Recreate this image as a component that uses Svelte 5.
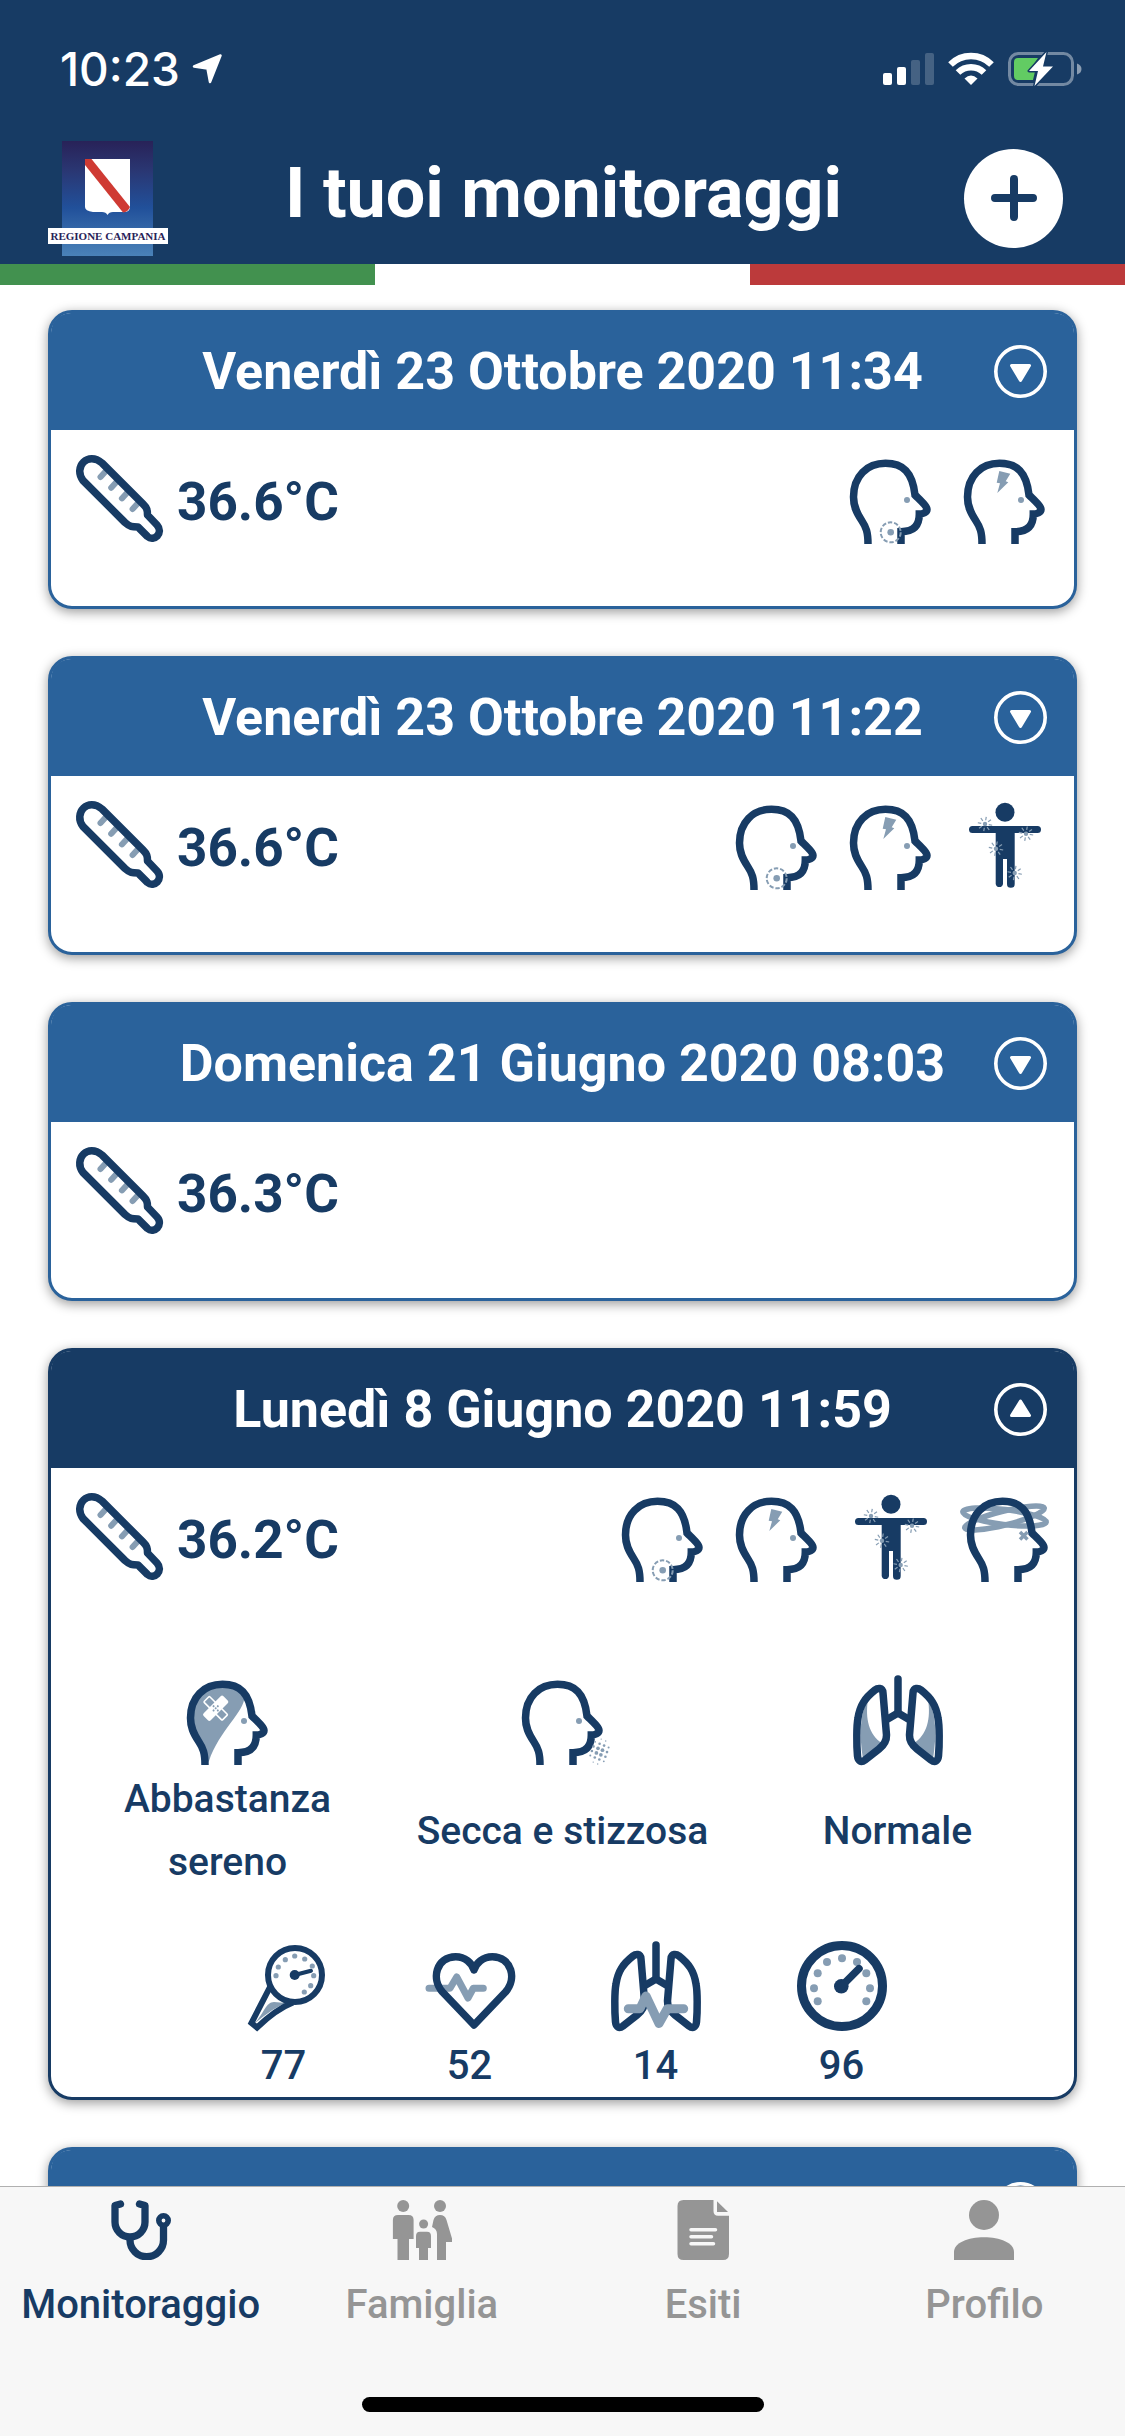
<script>
  let cards = $state([
    { date: 'Venerdì 23 Ottobre 2020 11:34', temp: '36.6°C', symptoms: ['throat', 'headache'], open: false },
    { date: 'Venerdì 23 Ottobre 2020 11:22', temp: '36.6°C', symptoms: ['throat', 'headache', 'aches'], open: false },
    { date: 'Domenica 21 Giugno 2020 08:03', temp: '36.3°C', symptoms: [], open: false },
    {
      date: 'Lunedì 8 Giugno 2020 11:59',
      temp: '36.2°C',
      symptoms: ['throat', 'headache', 'aches', 'dizzy'],
      open: true,
      states: [
        { icon: 'mood', label: 'Abbastanza sereno' },
        { icon: 'cough', label: 'Secca e stizzosa' },
        { icon: 'lungs', label: 'Normale' }
      ],
      vitals: [
        { icon: 'pressure', value: 77 },
        { icon: 'heart', value: 52 },
        { icon: 'breath', value: 14 },
        { icon: 'gauge', value: 96 }
      ]
    },
    { date: '', temp: '', symptoms: [], open: false }
  ]);

  const tabs = [
    { icon: 'stethoscope', label: 'Monitoraggio' },
    { icon: 'family', label: 'Famiglia' },
    { icon: 'document', label: 'Esiti' },
    { icon: 'person', label: 'Profilo' }
  ];
  let active = $state('Monitoraggio');

  const bursts = [[25, 24], [66, 33.7], [36, 48.7], [54.7, 73]];
  const rays = [10, 55, 100, 145, 190, 235, 280, 325];
  const gaugeDots = [[45, 17.3], [30, 21], [60, 21], [20.7, 32.3], [69.3, 32.3], [17, 47.3], [73, 47.3], [20.7, 60.3], [69.3, 60.3]];
  const pressureDots = [[55.7, 15], [46.3, 18.7], [65.7, 18], [39.3, 26], [73.3, 25], [37, 34.7], [74.7, 34.7], [71.7, 44.7], [65.3, 51]];

  // Halftone spray in front of the mouth: dots shrink away from the centre.
  const spray = [];
  for (let i = -1; i <= 2; i++) {
    for (let j = -2; j <= 3; j++) {
      const x = 80 + i * 4.5 - j * 1.6;
      const y = 73.3 + i * 1.9 + j * 4.6;
      const r = 2.3 - Math.hypot(x - 81.5, y - 76.5) * 0.13;
      if (r > 0.6) spray.push([x, y, r]);
    }
  }

  const headPath =
    'M22 90C22 78 20 73 16 67C10 58 7.5 52 7.5 43C7.5 22 21 9.3 39.5 9.3C57 9.3 66.500 18 69 41C74 46 81 52 81 55.500C81 58 77 60 73.300 60C73.300 70 69 77.700 55 77.700V90';
  const lungPath =
    'M22 15C24.500 13 29.500 12 30 18L33.500 60C33.700 66 31 70 26 74L12 85C8 88 5 86 4.500 81C3.500 70 3.500 50 5 43C7 30 12 23 22 15Z';
</script>

{#snippet head()}
  <path class="line" d={headPath} />
{/snippet}

{#snippet lungsShape(shaded)}
  {#each ['', 'translate(90 0) scale(-1 1)'] as side}
    <g transform={side}>
      {#if shaded}
        <path class="tint" d="M15 24C12 44 16 60 29 68L10 84C6 60 7 38 15 24Z" />
      {/if}
      <path class="line" d={lungPath} />
      <path class="line" d="M33 45L45 38" />
    </g>
  {/each}
  <path class="line round" d="M45 4V38" />
{/snippet}

{#snippet icon(name)}
  <svg class="icon" viewBox="0 0 90 90" aria-hidden="true">
    {#if name === 'thermometer'}
      <path class="tint-line" stroke-width="6" d="M31.500 17.500L26.500 23M42.200 28.200L37.200 33.700M52.900 38.900L47.900 44.400M63.600 49.600L58.600 55.100" />
      <path class="line join" d="M28 9L69 50C73 54 73.500 56 73.500 61L83 71C90 79 80 88 73.500 82.500L64 73C58 73 56 73 51 68.500L9 26.500C-1 13 14 -3 28 9Z" />
    {:else if name === 'throat'}
      {@render head()}
      <circle class="tint" cx="61" cy="46" r="3" />
      <circle class="ring" cx="44.700" cy="78.300" r="10" />
      <circle class="tint" cx="44.700" cy="78.300" r="3.300" />
    {:else if name === 'headache'}
      {@render head()}
      <circle class="tint" cx="61" cy="46" r="3" />
      <path class="tint" d="M39.300 17L50.300 19.700L45.700 27.300L48.300 28.300L37.300 39L40 29.300L36.700 28.700Z" />
    {:else if name === 'aches'}
      <circle class="solid" cx="45" cy="12.300" r="9.500" />
      <path class="solid" d="M12.500 26H77.500A3.500 3.500 0 0 1 77.500 33H54.700V84A3.800 3.800 0 0 1 47 84V59H43V84A3.700 3.700 0 0 1 35.700 84V33H12.500A3.500 3.500 0 0 1 12.500 26Z" />
      {#each bursts as [x, y]}
        <g transform="translate({x} {y})">
          <circle class="tint" r="2.200" />
          {#each rays as a}
            <path class="ray" d="M3.800 0H7.300" transform="rotate({a})" />
          {/each}
        </g>
      {/each}
    {:else if name === 'dizzy'}
      <g class="swirl">
        <ellipse cx="44.500" cy="26" rx="41" ry="7" transform="rotate(-14 44.500 26)" />
        <ellipse cx="44.500" cy="25" rx="42" ry="7.500" transform="rotate(7 44.500 25)" />
      </g>
      <g transform="translate(3 0)">{@render head()}</g>
      <path class="cross" d="M60 40L67.500 47.500M67.500 40L60 47.500" />
    {:else if name === 'mood'}
      <path class="tint" d="M24 88C22 78 20 73 16 67C10 58 7.500 52 7.500 43C7.500 22 21 9.300 39.500 9.300C52 9.300 60 14 61.300 22C62 36 36 56 26 86Z" />
      {@render head()}
      <circle class="tint" cx="61" cy="46" r="3" />
      <g transform="translate(32.700 33.300) rotate(45)">
        <rect class="plaster-line" x="-13" y="-4" width="26" height="8" rx="1" />
        <rect class="white" x="-5" y="-14" width="10" height="28" rx="2" />
        <circle class="tint" r="1" />
        <circle class="tint" cy="-3" r="1" />
        <circle class="tint" cy="3" r="1" />
        <circle class="tint" cx="-3" r="1" />
        <circle class="tint" cx="3" r="1" />
      </g>
    {:else if name === 'cough'}
      {@render head()}
      <circle class="tint" cx="61" cy="46" r="3" />
      {#each spray as [x, y, r]}
        <circle class="tint" cx={x} cy={y} {r} />
      {/each}
    {:else if name === 'lungs'}
      {@render lungsShape(true)}
    {:else if name === 'breath'}
      {@render lungsShape(false)}
      <path class="tint-line" stroke-width="9" d="M17.300 67.700H29L35 55L48 82.500L56.300 67.700H72.700" />
    {:else if name === 'heart'}
      <path class="tint-line" stroke-width="7" d="M4 47.300H25L31.700 36L43 57L48.300 47.300H58.300" />
      <path class="line join" d="M49 84L17.500 51C6 38 11 16 30.700 15.700C40 15.700 47 22 49 29C51 22 58 15.700 67.300 15.700C87 16 92 38 80.500 51Z" />
    {:else if name === 'gauge'}
      <circle class="line thick" cx="45" cy="45" r="40.500" />
      {#each gaugeDots as [x, y]}<circle class="tint" cx={x} cy={y} r="4" />{/each}
      <circle class="solid" cx="44.300" cy="45.300" r="7.300" />
      <path class="line round" d="M44.300 45.300L62 27.700" />
    {:else if name === 'pressure'}
      <path class="tint" d="M16 82C25 72 27 61 35 61L47 62C33 68 25 75 16 82Z" />
      <path class="thin" d="M31 46L12.500 82L18 86.500C30 75 40 67 54 61.500" />
      <circle class="thin" cx="56" cy="34" r="27" />
      {#each pressureDots as [x, y]}<circle class="tint" cx={x} cy={y} r="2.600" />{/each}
      <circle class="solid" cx="55.700" cy="34" r="5" />
      <path class="thin needle" d="M55.700 34L72 29.800" />
    {/if}
  </svg>
{/snippet}

<div class="app">
  <header>
    <div class="status">
      <div class="clock">
        <span>10:23</span>
        <svg width="30" height="30" viewBox="0 0 30 30" aria-hidden="true">
          <path fill="#fff" stroke="#fff" stroke-width="2.500" stroke-linejoin="round" d="M28.500 1.500L18 28L15.500 14.500L2 12.500Z" />
        </svg>
      </div>
      <div class="signals">
        <svg width="51" height="34" viewBox="0 0 51 34" aria-hidden="true">
          <g fill="#fff">
            <rect x="0" y="21" width="9" height="12" rx="2" />
            <rect x="14" y="15" width="9" height="18" rx="2" />
            <rect x="28" y="8" width="9" height="25" rx="2" opacity=".2" />
            <rect x="42" y="1" width="9" height="32" rx="2" opacity=".2" />
          </g>
        </svg>
        <svg width="46" height="34" viewBox="0 0 46 34" aria-hidden="true">
          <g fill="none" stroke="#fff" stroke-width="6.500">
            <path d="M2.500 12.500A29 29 0 0 1 43.500 12.500" />
            <path d="M10 20.500A18.500 18.500 0 0 1 36 20.500" />
          </g>
          <path fill="#fff" d="M23 33L16.500 26.500Q23 20.500 29.500 26.500Z" />
        </svg>
        <svg width="74" height="36" viewBox="0 0 74 36" aria-hidden="true">
          <rect x="1.500" y="2.500" width="63" height="31" rx="9" fill="none" stroke="#fff" stroke-width="3" opacity=".4" />
          <path d="M69 12.500Q73.500 14 73.500 18T69 23.500Z" fill="#fff" opacity=".5" />
          <path d="M10 7H30L22 18.500L27 20.500L25 29H10Q6 29 6 25V11Q6 7 10 7Z" fill="#62cc63" />
          <path d="M38.500 1L21 20H30L26.500 35L45 15.500H35Z" fill="#fff" stroke="#173b64" stroke-width="3" paint-order="stroke" stroke-linejoin="round" />
        </svg>
      </div>
    </div>

    <div class="titlebar">
      <svg class="logo" width="120" height="115" viewBox="0 0 120 115" role="img" aria-label="Regione Campania">
        <defs>
          <linearGradient id="sky" x1="0" y1="0" x2="0" y2="1">
            <stop offset="0" stop-color="#282258" />
            <stop offset=".25" stop-color="#2a3672" />
            <stop offset=".58" stop-color="#21509a" />
            <stop offset="1" stop-color="#4a82b8" />
          </linearGradient>
        </defs>
        <rect x="14" width="91" height="115" fill="url(#sky)" />
        <path fill="#fff" d="M37 18H82V66Q82 71 76 71H65Q61 71 59.500 74Q58 71 54 71H45Q37 70 37 66Z" />
        <path fill="#cf3a33" d="M37 18H43.500L82 66Q80 71 75 71.500L37 24Z" />
        <rect y="87" width="120" height="16" fill="#fff" />
        <text x="60" y="99" text-anchor="middle">REGIONE CAMPANIA</text>
      </svg>
      <h1>I tuoi monitoraggi</h1>
      <button class="add" aria-label="Aggiungi monitoraggio">
        <svg width="46" height="46" viewBox="0 0 46 46" aria-hidden="true">
          <path d="M23 4V42M4 23H42" fill="none" stroke="#173b64" stroke-width="8" stroke-linecap="round" />
        </svg>
      </button>
    </div>
    <div class="flag"><i class="green"></i><i></i><i class="red"></i></div>
  </header>

  <main>
    {#each cards as card}
      <article class:open={card.open}>
        <button class="date" aria-expanded={card.open} aria-label={card.date || 'Monitoraggio'} onclick={() => (card.open = !card.open)}>
          <span>{card.date}</span>
          <svg width="53" height="53" viewBox="0 0 53 53" aria-hidden="true">
            <circle cx="26.500" cy="26.500" r="24.700" fill="none" stroke="#fff" stroke-width="3.600" />
            <path
              d={card.open ? 'M26.500 18L35.500 32.500H17.500Z' : 'M26.500 35.500L35.500 20.500H17.500Z'}
              fill="#fff" stroke="#fff" stroke-width="3" stroke-linejoin="round"
            />
          </svg>
        </button>
        <div class="summary">
          {#if card.temp}
            {@render icon('thermometer')}
            <strong>{card.temp}</strong>
          {/if}
          <div class="symptoms">
            {#each card.symptoms as s}{@render icon(s)}{/each}
          </div>
        </div>
        {#if card.open && card.states}
          <ul class="states">
            {#each card.states as s}
              <li>{@render icon(s.icon)}<span>{s.label}</span></li>
            {/each}
          </ul>
          <ul class="vitals">
            {#each card.vitals as v}
              <li>{@render icon(v.icon)}<span>{v.value}</span></li>
            {/each}
          </ul>
        {/if}
      </article>
    {/each}
  </main>

  <nav>
    <div class="tabs">
      {#each tabs as tab}
        <button class:active={active === tab.label} onclick={() => (active = tab.label)}>
          <svg width="60" height="60" viewBox="0 0 60 60" aria-hidden="true">
            {#if tab.icon === 'stethoscope'}
              <g fill="none" stroke="currentColor" stroke-width="7.300" stroke-linejoin="round">
                <path d="M9.500 4L4 5.500V22A15 15 0 0 0 34 22V5.500L28.500 4" stroke-linecap="round" />
                <path d="M19 38V40A16.700 16.700 0 0 0 52.500 40V26" />
                <circle cx="52.500" cy="20.500" r="4.700" stroke-width="5.600" />
              </g>
            {:else if tab.icon === 'family'}
              <g fill="currentColor">
                <circle cx="11.200" cy="6" r="6" />
                <path d="M6 15H16.500Q21.600 15 21.600 20V39H17V60H5.500V39H.9V20Q.9 15 6 15Z" />
                <circle cx="31.600" cy="24" r="4.500" />
                <path d="M28 31.700H35Q39 31.700 39 36V48H36V60H27V48H24V36Q24 31.700 28 31.700Z" />
                <circle cx="48" cy="6" r="6" />
                <path d="M41.500 20Q43 15 48 15T54.500 20L61 42H54V60H45V34Q45 29 40 27Z" />
              </g>
            {:else if tab.icon === 'document'}
              <g fill="currentColor">
                <path d="M10.500 0H40.500V11Q40.500 15.700 45 15.700H56V54Q56 60 50 60H10.500Q4.500 60 4.500 54V6Q4.500 0 10.500 0Z" />
                <path d="M44 1.300L55 12H44Z" />
              </g>
              <path d="M18 29.700H42.500M18 36.700H38.500M18 43.700H40.500" fill="none" stroke="#f7f7f7" stroke-width="3.500" stroke-linecap="round" />
            {:else}
              <g fill="currentColor">
                <circle cx="30" cy="15" r="15" />
                <path d="M0 60V52C0 43 14 37.300 30 37.300S60 43 60 52V60Z" />
              </g>
            {/if}
          </svg>
          <span>{tab.label}</span>
        </button>
      {/each}
    </div>
    <div class="home"></div>
  </nav>
</div>

<style>
  :global(body) {
    background: #fff;
  }
  .app {
    --navy: #173b64;
    --blue: #2a629b;
    --tint: #869db3;
    display: flex;
    flex-direction: column;
    height: 100vh;
    overflow: hidden;
    color: var(--navy);
    font-family: Roboto, 'Liberation Sans', sans-serif;
  }
  button {
    border: 0;
    padding: 0;
    background: none;
    color: inherit;
    font: inherit;
    cursor: pointer;
  }
  svg {
    display: block;
    flex: none;
  }
  header {
    background: var(--navy);
    color: #fff;
  }
  .status {
    display: flex;
    justify-content: space-between;
    align-items: center;
    padding: 0 43px 0 60px;
    height: 138px;
  }
  .clock,
  .signals {
    display: flex;
    align-items: center;
    gap: 14px;
  }
  .clock {
    gap: 12px;
    font: 500 46px/48px Inter, sans-serif;
  }
  .titlebar {
    display: grid;
    grid-template-columns: 120px 1fr 104px;
    align-items: center;
    justify-items: center;
    height: 120px;
    padding: 0 62px 6px 48px;
  }
  .logo text {
    font: 700 11px 'Liberation Serif', serif;
    fill: #282258;
  }
  h1 {
    margin: 0;
    padding-bottom: 10px;
    font-size: 70px;
    font-weight: 700;
    line-height: 80px;
    white-space: nowrap;
  }
  .add {
    display: grid;
    place-items: center;
    justify-self: end;
    width: 99px;
    height: 99px;
    border-radius: 50%;
    background: #fff;
  }
  .flag {
    display: grid;
    grid-template-columns: repeat(3, 1fr);
    height: 21px;
  }
  .flag i {
    background: #fff;
  }
  .flag .green {
    background: #42914f;
  }
  .flag .red {
    background: #bc3a3b;
  }
  main {
    flex: 1;
    min-height: 0;
    overflow: hidden;
    display: flex;
    flex-direction: column;
    gap: 47px;
    padding: 25px 48px 0;
  }
  article {
    flex: none;
    border: 3px solid var(--blue);
    border-radius: 24px;
    background: #fff;
    box-shadow: 0 3px 12px rgba(0, 0, 0, 0.4);
  }
  article.open {
    border-color: var(--navy);
  }
  .date {
    display: grid;
    grid-template-columns: 1fr 53px;
    align-items: center;
    width: 100%;
    height: 117px;
    padding: 0 27px 0 80px;
    border-radius: 20px 20px 0 0;
    background: var(--blue);
    color: #fff;
    font-size: 52px;
    font-weight: 700;
    line-height: 60px;
    white-space: nowrap;
  }
  .open .date {
    background: var(--navy);
  }
  .summary {
    display: flex;
    align-items: center;
    min-height: 90px;
    padding: 24px 24px 62px 23px;
    gap: 13px;
  }
  .summary strong {
    padding-top: 6px;
    font-size: 53px;
    line-height: 60px;
  }
  .symptoms {
    display: flex;
    gap: 24px;
    margin-left: auto;
  }
  ul {
    display: grid;
    margin: 0;
    padding: 0;
    list-style: none;
    font-size: 39px;
    font-weight: 500;
    line-height: 63px;
    text-align: center;
  }
  li {
    display: flex;
    flex-direction: column;
    align-items: center;
    gap: 3px;
  }
  .states {
    grid-template-columns: repeat(3, 1fr);
    padding: 31px 9px 0;
  }
  .states span {
    display: flex;
    align-items: center;
    max-width: 300px;
    min-height: 126px;
  }
  .vitals {
    grid-template-columns: repeat(4, 186px);
    justify-content: center;
    padding-top: 47px;
    font-size: 40px;
  }
  .icon {
    width: 90px;
    height: 90px;
    overflow: visible;
  }
  .line,
  .thin {
    fill: none;
    stroke: var(--navy);
    stroke-width: 7.5;
  }
  .thick {
    stroke-width: 9;
  }
  .thin {
    stroke-width: 6;
  }
  .needle {
    stroke-width: 4;
    stroke-linecap: round;
  }
  .round {
    stroke-linecap: round;
  }
  .join {
    stroke-linejoin: round;
  }
  .solid {
    fill: var(--navy);
  }
  .tint {
    fill: var(--tint);
  }
  .white {
    fill: #fff;
  }
  .tint-line {
    fill: none;
    stroke: var(--tint);
    stroke-linecap: round;
    stroke-linejoin: round;
  }
  .ring {
    fill: none;
    stroke: var(--tint);
    stroke-width: 2;
    stroke-dasharray: 4.4 1.88;
  }
  .ray {
    stroke: var(--tint);
    stroke-width: 1.2;
  }
  .swirl {
    fill: none;
    stroke: var(--tint);
    stroke-width: 5.5;
  }
  .cross {
    stroke: var(--tint);
    stroke-width: 3.5;
  }
  .plaster-line {
    fill: none;
    stroke: #fff;
    stroke-width: 1.6;
  }
  nav {
    border-top: 1px solid #b0b0b0;
    background: #f7f7f7;
    color: #959595;
  }
  .tabs {
    display: grid;
    grid-template-columns: repeat(4, 1fr);
    padding-top: 13px;
  }
  .tabs button {
    display: flex;
    flex-direction: column;
    align-items: center;
    gap: 15px;
    font-size: 40px;
    font-weight: 500;
    line-height: 60px;
  }
  .tabs .active {
    color: var(--navy);
  }
  .home {
    width: 402px;
    height: 15px;
    margin: 62px auto 24px;
    border-radius: 8px;
    background: #000;
  }
</style>
